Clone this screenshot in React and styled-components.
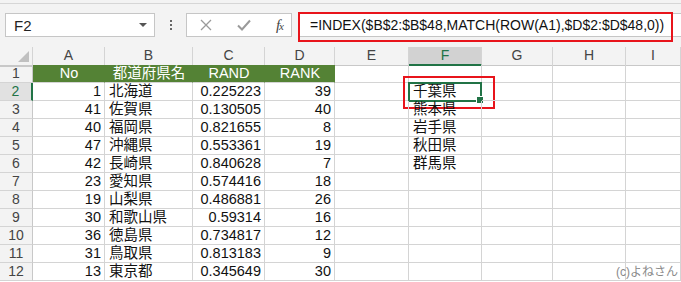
import styled, { createGlobalStyle } from 'styled-components';

const GlobalStyle = createGlobalStyle`
  html, body {
    margin: 0;
    padding: 0;
    background: #fff;
  }
  body {
    font-family: "Liberation Sans", "Noto Sans CJK JP", sans-serif;
    overflow: hidden;
  }
`;

const GREEN = '#217346';
const HEAD_GREEN = '#548235';
const GRID = '#d4d4d4';
const TEMPLATE = '33px 72px 88px 72px 70px 74px 73px 71px 73px 1fr';

const Window = styled.div`
  width: 681px;
  height: 282px;
  overflow: hidden;
  display: flex;
  flex-direction: column;
  background: #f3f3f3;
`;

const TopStrip = styled.div`
  height: 3px;
  border-bottom: 1px solid #d6d6d6;
`;

const Toolbar = styled.div`
  display: flex;
  align-items: center;
  height: 43px;
  padding: 0 0 1px 5px;
  box-sizing: border-box;
`;

const NameBox = styled.div`
  width: 150px;
  height: 24px;
  box-sizing: border-box;
  border: 1px solid #c6c6c6;
  background: #fff;
  display: flex;
  align-items: center;
  padding: 0 7px 0 8px;
  font-size: 15px;
  color: #222;
`;

const DropArrow = styled.span`
  margin-left: auto;
  width: 0;
  height: 0;
  border-left: 4px solid transparent;
  border-right: 4px solid transparent;
  border-top: 4px solid #555;
`;

const Grip = styled.div`
  width: 31px;
  display: flex;
  flex-direction: column;
  align-items: center;
  gap: 2px;
  span {
    width: 2px;
    height: 2px;
    background: #666;
  }
`;

const ButtonGroup = styled.div`
  width: 106px;
  height: 24px;
  box-sizing: border-box;
  border: 1px solid #c6c6c6;
  background: #fff;
  display: flex;
  align-items: center;
  justify-content: space-between;
  padding: 0 8px 0 13px;
`;

const Fx = styled.span`
  font-family: "Liberation Serif", serif;
  font-style: italic;
  font-size: 15px;
  color: #444;
  letter-spacing: -1px;
  small {
    font-size: 11px;
  }
`;

const FormulaBar = styled.div`
  position: relative;
  margin-left: 6px;
  flex: 1;
  height: 24px;
  box-sizing: border-box;
  border: 1px solid #c6c6c6;
  border-right: none;
  background: #fff;
  display: flex;
  align-items: center;
  padding-left: 11px;
  font-size: 14px;
  color: #111;
  white-space: nowrap;
`;

const RedMark = styled.div`
  position: absolute;
  border: 2px solid #e8141b;
  pointer-events: none;
`;

const Sheet = styled.div`
  position: relative;
  flex: 1;
  background: #fff;
`;

const Row = styled.div`
  display: grid;
  grid-template-columns: ${TEMPLATE};
  height: 18px;
`;

const Cell = styled.div`
  position: relative;
  box-sizing: border-box;
  border-right: 1px solid ${GRID};
  border-bottom: 1px solid ${GRID};
  padding: 0 3px 0 4px;
  font-size: 14.5px;
  line-height: 17px;
  white-space: nowrap;
  color: #111;
  text-align: ${p => p.$align || 'left'};
  ${p => p.$title && `
    background: ${HEAD_GREEN};
    border-right-color: ${HEAD_GREEN};
    color: #fff;
    text-align: center;
  `}
`;

const ColHead = styled.div`
  position: relative;
  box-sizing: border-box;
  border-right: 1px solid ${GRID};
  border-bottom: ${p => (p.$active ? `2px solid ${GREEN}` : `1px solid #c8c8c8`)};
  background: ${p => (p.$active ? '#d2d2d2' : '#f3f3f3')};
  color: ${p => (p.$active ? GREEN : '#444')};
  font-size: 14px;
  line-height: 17px;
  text-align: center;
`;

const Corner = styled(ColHead)`
  &::after {
    content: '';
    position: absolute;
    right: 3px;
    bottom: 3px;
    width: 0;
    height: 0;
    border-left: 11px solid transparent;
    border-bottom: 11px solid #c0c0c0;
  }
`;

const RowHead = styled.div`
  box-sizing: border-box;
  border-right: ${p => (p.$active ? `2px solid ${GREEN}` : `1px solid #c8c8c8`)};
  border-bottom: 1px solid ${GRID};
  background: ${p => (p.$active ? '#e1e1e1' : '#f3f3f3')};
  color: ${p => (p.$active ? GREEN : '#444')};
  font-size: 14px;
  line-height: 17px;
  text-align: center;
`;

const Selection = styled.div`
  position: absolute;
  left: -1px;
  top: -1px;
  width: 74px;
  height: 20px;
  box-sizing: border-box;
  border: 2px solid ${GREEN};
  pointer-events: none;
  &::after {
    content: '';
    position: absolute;
    right: -4px;
    bottom: -4px;
    width: 6px;
    height: 6px;
    background: ${GREEN};
    border: 1px solid #fff;
  }
`;

const Credit = styled.div`
  position: absolute;
  right: 3px;
  bottom: 3px;
  font-size: 12px;
  color: #8a8a8a;
`;

const letters = ['A', 'B', 'C', 'D', 'E', 'F', 'G', 'H', 'I'];

const data = [
  [1, '北海道', '0.225223', 39],
  [41, '佐賀県', '0.130505', 40],
  [40, '福岡県', '0.821655', 8],
  [47, '沖縄県', '0.553361', 19],
  [42, '長崎県', '0.840628', 7],
  [23, '愛知県', '0.574416', 18],
  [19, '山梨県', '0.486881', 26],
  [30, '和歌山県', '0.59314', 16],
  [36, '徳島県', '0.734817', 12],
  [31, '鳥取県', '0.813183', 9],
  [13, '東京都', '0.345649', 30],
];

const result = ['千葉県', '熊本県', '岩手県', '秋田県', '群馬県'];

const Cross = () => (
  <svg width="12" height="12" viewBox="0 0 12 12">
    <path d="M1 1L11 11M11 1L1 11" stroke="#9a9a9a" strokeWidth="1.3" fill="none" />
  </svg>
);

const Check = () => (
  <svg width="14" height="12" viewBox="0 0 14 12">
    <path d="M1 6.5L5 10.5L13 1.5" stroke="#9a9a9a" strokeWidth="2" fill="none" />
  </svg>
);

export default function App() {
  return (
    <Window>
      <GlobalStyle />
      <TopStrip />
      <Toolbar>
        <NameBox>
          F2
          <DropArrow />
        </NameBox>
        <Grip>
          <span />
          <span />
          <span />
        </Grip>
        <ButtonGroup>
          <Cross />
          <Check />
          <Fx>f<small>x</small></Fx>
        </ButtonGroup>
        <FormulaBar>
          =INDEX($B$2:$B$48,MATCH(ROW(A1),$D$2:$D$48,0))
          <RedMark style={{ left: -1, top: -2, width: 371, height: 26 }} />
        </FormulaBar>
      </Toolbar>
      <Sheet>
        <Row>
          <Corner />
          {letters.map(l => (
            <ColHead key={l} $active={l === 'F'}>{l}</ColHead>
          ))}
          <ColHead />
        </Row>
        <Row>
          <RowHead>1</RowHead>
          <Cell $title>No</Cell>
          <Cell $title>都道府県名</Cell>
          <Cell $title>RAND</Cell>
          <Cell $title>RANK</Cell>
          <Cell />
          <Cell />
          <Cell />
          <Cell />
          <Cell />
        </Row>
        {data.map((d, i) => (
          <Row key={i}>
            <RowHead $active={i === 0}>{i + 2}</RowHead>
            <Cell $align="right">{d[0]}</Cell>
            <Cell>{d[1]}</Cell>
            <Cell $align="right">{d[2]}</Cell>
            <Cell $align="right">{d[3]}</Cell>
            <Cell />
            <Cell>
              {result[i]}
              {i === 0 && (
                <>
                  <Selection />
                  <RedMark style={{ left: -6, top: -7, width: 88, height: 29 }} />
                </>
              )}
            </Cell>
            <Cell />
            <Cell />
            <Cell />
          </Row>
        ))}
        <Credit>(c)よねさん</Credit>
      </Sheet>
    </Window>
  );
}
